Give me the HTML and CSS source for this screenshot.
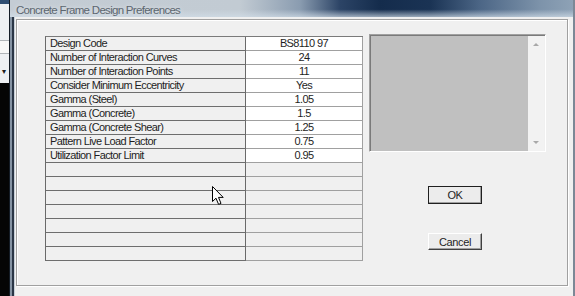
FILE: index.html
```html
<!DOCTYPE html>
<html lang="en">
<head>
  <meta charset="UTF-8">
  <title>Concrete Frame Design Preferences</title>
  <link rel="stylesheet" href="styles.css">
</head>
<body>
  <div class="screen">
    <div class="backdrop">
      <div class="bd-top"></div>
      <div class="bd-panel">
        <div class="bd-box"></div>
        <div class="bd-arrow">&#9662;</div>
      </div>
      <div class="bd-dark"></div>
    </div>

    <div class="window">
      <div class="titlebar">
        <span class="title">Concrete Frame Design Preferences</span>
      </div>
      <div class="window-body">
        <div class="side-frame"></div>
        <div class="client">
          <div class="frame">
            <div class="prefs">
              <div class="cell label">Design Code</div><div class="cell value">BS8110 97</div>
              <div class="cell label">Number of Interaction Curves</div><div class="cell value">24</div>
              <div class="cell label">Number of Interaction Points</div><div class="cell value">11</div>
              <div class="cell label">Consider Minimum Eccentricity</div><div class="cell value">Yes</div>
              <div class="cell label">Gamma (Steel)</div><div class="cell value">1.05</div>
              <div class="cell label">Gamma (Concrete)</div><div class="cell value">1.5</div>
              <div class="cell label">Gamma (Concrete Shear)</div><div class="cell value">1.25</div>
              <div class="cell label">Pattern Live Load Factor</div><div class="cell value">0.75</div>
              <div class="cell label">Utilization Factor Limit</div><div class="cell value">0.95</div>
              <div class="cell label"></div><div class="cell value empty"></div>
              <div class="cell label"></div><div class="cell value empty"></div>
              <div class="cell label"></div><div class="cell value empty"></div>
              <div class="cell label"></div><div class="cell value empty"></div>
              <div class="cell label"></div><div class="cell value empty"></div>
              <div class="cell label"></div><div class="cell value empty"></div>
              <div class="cell label"></div><div class="cell value empty"></div>
            </div>

            <div class="side">
              <div class="listbox">
                <div class="list-area"></div>
                <div class="scroll">
                  <span class="arrow up"></span>
                  <span class="arrow down"></span>
                </div>
              </div>
              <button class="btn default">OK</button>
              <button class="btn cancel">Cancel</button>
            </div>

            <svg class="cursor" width="13" height="20" viewBox="0 0 13 20">
              <path d="M0.5 0.5 L0.5 15.5 L4 12.2 L6.6 18.4 L9 17.4 L6.5 11.4 L11.2 11.4 Z" fill="#fff" stroke="#000" stroke-width="1" stroke-linejoin="miter"/>
            </svg>
          </div>
        </div>
      </div>
    </div>
  </div>
</body>
</html>
```

FILE: styles.css
```css
body {
  margin: 0;
  background: #f0f0f0;
  font-family: "Liberation Sans", Arial, sans-serif;
  overflow: hidden;
}
.screen {
  display: flex;
  width: 575px;
  height: 296px;
}

/* window behind the dialog, left strip */
.backdrop {
  width: 9px;
  display: flex;
  flex-direction: column;
}
.bd-top {
  height: 4px;
  background: #2f4d72;
}
.bd-panel {
  height: 79px;
  background: #eef0f3;
  position: relative;
}
.bd-box {
  margin-top: 36px;
  height: 12px;
  border-top: 1px solid #b0b4b8;
  border-bottom: 1px solid #b0b4b8;
  background: #f8f8f8;
}
.bd-arrow {
  font-size: 8px;
  color: #202020;
  padding: 14px 0 0 2px;
  line-height: 8px;
}
.bd-dark {
  flex: 1;
  background: #050505;
}

/* dialog window */
.window {
  flex: 1;
  display: flex;
  flex-direction: column;
  border-left: 1px solid #141c26;
  border-right: 2px solid #7c8896;
}
.titlebar {
  height: 17px;
  padding-left: 6px;
  background:
    linear-gradient(to bottom, rgba(255,255,255,0) 55%, rgba(210,222,232,0.7) 100%),
    linear-gradient(to right, #c4ccd4 0, #c2cbd3 230px, #8a9cb0 290px, #2c4466 330px, #142c4c 370px, #1a3354 420px, #4c6686 470px, #7d93aa 530px, #8ea2b6 100%);
}
.title {
  display: inline-block;
  font-size: 11.5px;
  line-height: 17px;
  letter-spacing: -0.7px;
  color: #5c666f;
  text-shadow: 0 0 4px #e4e8ec;
}
.window-body {
  flex: 1;
  display: flex;
}
.side-frame {
  width: 5px;
  background: linear-gradient(to right, #8694a4 0, #8694a4 2px, #2a3646 2px, #2a3646 4px, #c8d0d8 4px);
}
.client {
  flex: 1;
  padding: 2px 5px 10px 1px;
  background: #f0f0f0;
}
.frame {
  position: relative;
  display: flex;
  gap: 6px;
  height: 100%;
  box-sizing: border-box;
  padding: 16px 0 0 28px;
  border: 1px solid #a0a0a0;
  box-shadow: inset 1px 1px #ffffff, 1px 1px #ffffff;
}

/* property grid */
.prefs {
  display: grid;
  grid-template-columns: 200px 117px;
  grid-auto-rows: 14px;
  align-self: flex-start;
  border-top: 1px solid #7a7a7a;
  border-left: 1px solid #6a6a6a;
}
.cell {
  box-sizing: border-box;
  font-size: 11px;
  line-height: 13px;
  letter-spacing: -0.6px;
  color: #1e1e1e;
  white-space: nowrap;
  overflow: hidden;
}
.label {
  padding-left: 4px;
  background: #f0f0f0;
  border-right: 1px solid #6a6a6a;
  border-bottom: 1px solid #6e6e6e;
}
.value {
  text-align: center;
  background: #fff;
  border-right: 1px solid #a0a0a0;
  border-bottom: 1px solid #a0a0a0;
}
.value.empty {
  background: #f0f0f0;
}

/* right side */
.side {
  display: flex;
  flex-direction: column;
  align-items: flex-start;
  margin-top: -2px;
}
.listbox {
  display: flex;
  width: 177px;
  height: 118px;
  box-sizing: border-box;
  border: 1px solid;
  border-color: #a0a0a0 #ffffff #ffffff #a0a0a0;
  box-shadow: inset 1px 1px #7a7a7a;
  padding: 1px 1px 0 1px;
}
.list-area {
  flex: 1;
  background: #c0c0c0;
}
.scroll {
  width: 16px;
  background: #f2f2f2;
  position: relative;
}
.arrow {
  position: absolute;
  left: 5px;
  width: 0;
  height: 0;
  border-left: 3px solid transparent;
  border-right: 3px solid transparent;
}
.arrow.up {
  top: 7px;
  border-bottom: 3px solid #a8a8a8;
}
.arrow.down {
  bottom: 7px;
  border-top: 3px solid #a8a8a8;
}
.btn {
  width: 54px;
  height: 18px;
  margin-left: 59px;
  padding: 0;
  font-family: "Liberation Sans", Arial, sans-serif;
  font-size: 11px;
  letter-spacing: -0.4px;
  color: #1e1e1e;
  background: #ececec;
  border: 1px solid;
  border-color: #ffffff #404040 #404040 #ffffff;
  box-shadow: inset -1px -1px #a0a0a0;
}
.btn.default {
  margin-top: 34px;
  outline: 1px solid #202020;
  outline-offset: -1px;
  border-color: #f8f8f8 #404040 #404040 #f8f8f8;
}
.btn.cancel {
  margin-top: 29px;
  height: 17px;
}

.cursor {
  position: absolute;
  left: 195px;
  top: 166px;
}
```
